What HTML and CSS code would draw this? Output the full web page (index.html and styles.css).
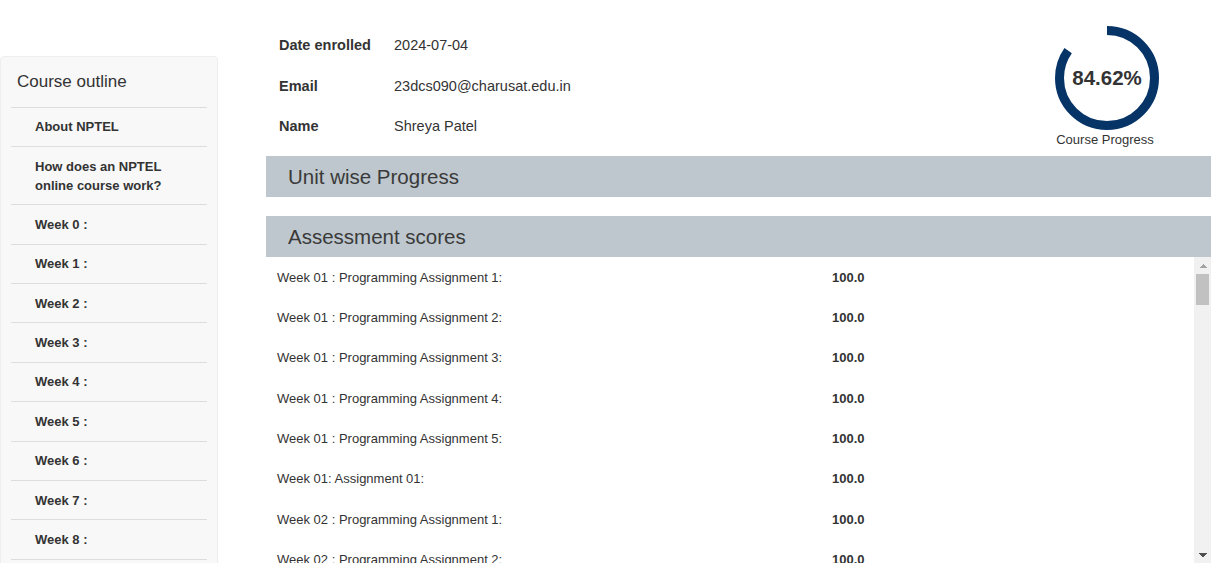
FILE: index.html
```html
<!DOCTYPE html>
<html lang="en">
<head>
<meta charset="utf-8">
<title>Course Progress</title>
<link rel="stylesheet" href="styles.css">
</head>
<body>
<div class="page">
  <aside class="sidebar">
    <div class="sidebar-title">Course outline</div>
    <ul class="outline">
      <li>About NPTEL</li>
      <li>How does an NPTEL online course work?</li>
      <li>Week 0 :</li>
      <li>Week 1 :</li>
      <li>Week 2 :</li>
      <li>Week 3 :</li>
      <li>Week 4 :</li>
      <li>Week 5 :</li>
      <li>Week 6 :</li>
      <li>Week 7 :</li>
      <li>Week 8 :</li>
      <li>Week 9 :</li>
      <li>Week 10 :</li>
      <li>Week 11 :</li>
      <li>Week 12 :</li>
    </ul>
  </aside>

  <main class="main">
    <div class="top">
      <div class="info">
        <div class="info-label">Date enrolled</div><div class="info-value">2024-07-04</div>
        <div class="info-label">Email</div><div class="info-value">23dcs090@charusat.edu.in</div>
        <div class="info-label">Name</div><div class="info-value">Shreya Patel</div>
      </div>
      <div class="progress">
        <div class="ring">
          <svg width="104" height="104" viewBox="0 0 104 104">
            <circle cx="52" cy="52" r="47.5" fill="none" stroke="#063467" stroke-width="9"
              stroke-dasharray="252.55 298.45" transform="rotate(-90 52 52)"/>
          </svg>
          <span class="ring-value">84.62%</span>
        </div>
        <div class="ring-caption">Course Progress</div>
      </div>
    </div>

    <div class="section-bar">Unit wise Progress</div>
    <div class="section-bar second">Assessment scores</div>

    <div class="scores-wrap">
      <div class="scores">
        <div class="row"><span>Week 01 : Programming Assignment 1:</span><b>100.0</b></div>
        <div class="row"><span>Week 01 : Programming Assignment 2:</span><b>100.0</b></div>
        <div class="row"><span>Week 01 : Programming Assignment 3:</span><b>100.0</b></div>
        <div class="row"><span>Week 01 : Programming Assignment 4:</span><b>100.0</b></div>
        <div class="row"><span>Week 01 : Programming Assignment 5:</span><b>100.0</b></div>
        <div class="row"><span>Week 01: Assignment 01:</span><b>100.0</b></div>
        <div class="row"><span>Week 02 : Programming Assignment 1:</span><b>100.0</b></div>
        <div class="row"><span>Week 02 : Programming Assignment 2:</span><b>100.0</b></div>
        <div class="row"><span>Week 02 : Programming Assignment 3:</span><b>100.0</b></div>
        <div class="row"><span>Week 02 : Programming Assignment 4:</span><b>100.0</b></div>
        <div class="row"><span>Week 02 : Programming Assignment 5:</span><b>100.0</b></div>
        <div class="row"><span>Week 02: Assignment 02:</span><b>100.0</b></div>
        <div class="row"><span>Week 03 : Programming Assignment 1:</span><b>100.0</b></div>
        <div class="row"><span>Week 03 : Programming Assignment 2:</span><b>100.0</b></div>
        <div class="row"><span>Week 03 : Programming Assignment 3:</span><b>100.0</b></div>
        <div class="row"><span>Week 03 : Programming Assignment 4:</span><b>100.0</b></div>
        <div class="row"><span>Week 03 : Programming Assignment 5:</span><b>100.0</b></div>
        <div class="row"><span>Week 03: Assignment 03:</span><b>90.0</b></div>
        <div class="row"><span>Week 04 : Programming Assignment 1:</span><b>100.0</b></div>
        <div class="row"><span>Week 04 : Programming Assignment 2:</span><b>100.0</b></div>
        <div class="row"><span>Week 04 : Programming Assignment 3:</span><b>100.0</b></div>
        <div class="row"><span>Week 04 : Programming Assignment 4:</span><b>100.0</b></div>
        <div class="row"><span>Week 04 : Programming Assignment 5:</span><b>100.0</b></div>
        <div class="row"><span>Week 04: Assignment 04:</span><b>100.0</b></div>
        <div class="row"><span>Week 05 : Programming Assignment 1:</span><b>100.0</b></div>
        <div class="row"><span>Week 05 : Programming Assignment 2:</span><b>100.0</b></div>
        <div class="row"><span>Week 05 : Programming Assignment 3:</span><b>100.0</b></div>
        <div class="row"><span>Week 05 : Programming Assignment 4:</span><b>100.0</b></div>
        <div class="row"><span>Week 05 : Programming Assignment 5:</span><b>100.0</b></div>
        <div class="row"><span>Week 05: Assignment 05:</span><b>80.0</b></div>
        <div class="row"><span>Week 06 : Programming Assignment 1:</span><b>100.0</b></div>
        <div class="row"><span>Week 06 : Programming Assignment 2:</span><b>100.0</b></div>
        <div class="row"><span>Week 06 : Programming Assignment 3:</span><b>100.0</b></div>
        <div class="row"><span>Week 06 : Programming Assignment 4:</span><b>100.0</b></div>
        <div class="row"><span>Week 06 : Programming Assignment 5:</span><b>100.0</b></div>
        <div class="row"><span>Week 06: Assignment 06:</span><b>100.0</b></div>
        <div class="row"><span>Week 07 : Programming Assignment 1:</span><b>100.0</b></div>
        <div class="row"><span>Week 07 : Programming Assignment 2:</span><b>100.0</b></div>
        <div class="row"><span>Week 07 : Programming Assignment 3:</span><b>100.0</b></div>
        <div class="row"><span>Week 07 : Programming Assignment 4:</span><b>100.0</b></div>
        <div class="row"><span>Week 07 : Programming Assignment 5:</span><b>100.0</b></div>
        <div class="row"><span>Week 07: Assignment 07:</span><b>90.0</b></div>
        <div class="row"><span>Week 08 : Programming Assignment 1:</span><b>100.0</b></div>
        <div class="row"><span>Week 08 : Programming Assignment 2:</span><b>100.0</b></div>
        <div class="row"><span>Week 08 : Programming Assignment 3:</span><b>100.0</b></div>
        <div class="row"><span>Week 08 : Programming Assignment 4:</span><b>100.0</b></div>
        <div class="row"><span>Week 08 : Programming Assignment 5:</span><b>100.0</b></div>
        <div class="row"><span>Week 08: Assignment 08:</span><b>100.0</b></div>
        <div class="row"><span>Week 09 : Programming Assignment 1:</span><b>100.0</b></div>
        <div class="row"><span>Week 09 : Programming Assignment 2:</span><b>100.0</b></div>
        <div class="row"><span>Week 09 : Programming Assignment 3:</span><b>100.0</b></div>
        <div class="row"><span>Week 09 : Programming Assignment 4:</span><b>100.0</b></div>
        <div class="row"><span>Week 09 : Programming Assignment 5:</span><b>100.0</b></div>
        <div class="row"><span>Week 09: Assignment 09:</span><b>100.0</b></div>
        <div class="row"><span>Week 10 : Programming Assignment 1:</span><b>0.0</b></div>
        <div class="row"><span>Week 10 : Programming Assignment 2:</span><b>0.0</b></div>
        <div class="row"><span>Week 10 : Programming Assignment 3:</span><b>0.0</b></div>
        <div class="row"><span>Week 10 : Programming Assignment 4:</span><b>0.0</b></div>
        <div class="row"><span>Week 10 : Programming Assignment 5:</span><b>0.0</b></div>
        <div class="row"><span>Week 10: Assignment 10:</span><b>100.0</b></div>
        <div class="row"><span>Week 11 : Programming Assignment 1:</span><b>0.0</b></div>
        <div class="row"><span>Week 11 : Programming Assignment 2:</span><b>0.0</b></div>
        <div class="row"><span>Week 11 : Programming Assignment 3:</span><b>0.0</b></div>
        <div class="row"><span>Week 11 : Programming Assignment 4:</span><b>0.0</b></div>
        <div class="row"><span>Week 11 : Programming Assignment 5:</span><b>0.0</b></div>
        <div class="row"><span>Week 11: Assignment 11:</span><b>100.0</b></div>
      </div>
      <div class="scrollbar" aria-hidden="true">
        <div class="sb-btn sb-up"></div>
        <div class="sb-track"><div class="sb-thumb"></div></div>
        <div class="sb-btn sb-down"></div>
      </div>
    </div>
  </main>
</div>
</body>
</html>
```

FILE: styles.css
```css
html, body {
  margin: 0;
  padding: 0;
  height: 100%;
  overflow: hidden;
  background: #fff;
}

body {
  font-family: "Liberation Sans", Arial, sans-serif;
  color: #333;
}

.page {
  display: flex;
  align-items: flex-start;
}

/* ---------- Sidebar ---------- */
.sidebar {
  box-sizing: border-box;
  width: 218px;
  margin: 56px 0 0 0;
  padding: 0 10px;
  background: #f8f8f8;
  border: 1px solid #eeeeee;
  border-radius: 4px;
  flex-shrink: 0;
}

.sidebar-title {
  padding: 15px 6px 14.5px;
  font-size: 17px;
  line-height: 20px;
  color: #333;
  border-bottom: 1px solid #dddddd;
}

.outline {
  list-style: none;
  margin: 0;
  padding: 0;
}

.outline li {
  padding: 9.7px 24px;
  font-size: 13px;
  font-weight: bold;
  line-height: 19px;
  color: #333;
  border-bottom: 1px solid #dddddd;
}

/* ---------- Main ---------- */
.main {
  width: 945px;
  margin-left: 48px;
  flex-shrink: 0;
}

.top {
  display: flex;
  justify-content: space-between;
  align-items: flex-start;
  height: 156px;
}

.info {
  display: grid;
  grid-template-columns: 115px auto;
  grid-auto-rows: 40.5px;
  align-items: center;
  padding: 24.75px 0 0 13px;
  font-size: 14.5px;
  line-height: 20px;
}

.info-label {
  font-weight: bold;
}

.progress {
  width: 104px;
  margin: 26px 52px 0 0;
  display: flex;
  flex-direction: column;
  align-items: center;
}

.ring {
  display: grid;
  place-items: center;
  width: 104px;
  height: 104px;
}

.ring svg,
.ring-value {
  grid-area: 1 / 1;
}

.ring svg {
  display: block;
}

.ring-value {
  font-size: 20.5px;
  font-weight: bold;
  color: #333;
}

.ring-caption {
  margin-top: 1.5px;
  margin-right: 4px;
  font-size: 13px;
  line-height: 15px;
  white-space: nowrap;
  color: #333;
}

.section-bar {
  height: 41px;
  box-sizing: border-box;
  padding-left: 22px;
  display: flex;
  align-items: center;
  background: #bec7cd;
  font-size: 20.5px;
  color: #3a3a3a;
}

.section-bar.second {
  margin-top: 19px;
}

/* ---------- Scores list ---------- */
.scores-wrap {
  display: flex;
  height: 306px;
}

.scores {
  flex: 1;
  overflow: hidden;
}

.row {
  display: grid;
  grid-template-columns: 555px auto;
  align-items: center;
  height: 40.35px;
  padding-left: 11px;
  font-size: 13px;
  color: #333;
}

.row b {
  font-weight: bold;
}

.scrollbar {
  width: 17px;
  flex-shrink: 0;
  display: flex;
  flex-direction: column;
  background: #f1f1f1;
}

.sb-btn {
  height: 17px;
  flex-shrink: 0;
}

.sb-up {
  background: conic-gradient(from 135deg at 50% 0, #a3a3a3 0 90deg, transparent 90deg) center / 8px 4px no-repeat;
}

.sb-down {
  background: conic-gradient(from -45deg at 50% 100%, #505050 0 90deg, transparent 90deg) center / 8px 4px no-repeat;
}

.sb-track {
  flex: 1;
  padding: 0 2px;
}

.sb-thumb {
  height: 31px;
  background: #c1c1c1;
}
```
